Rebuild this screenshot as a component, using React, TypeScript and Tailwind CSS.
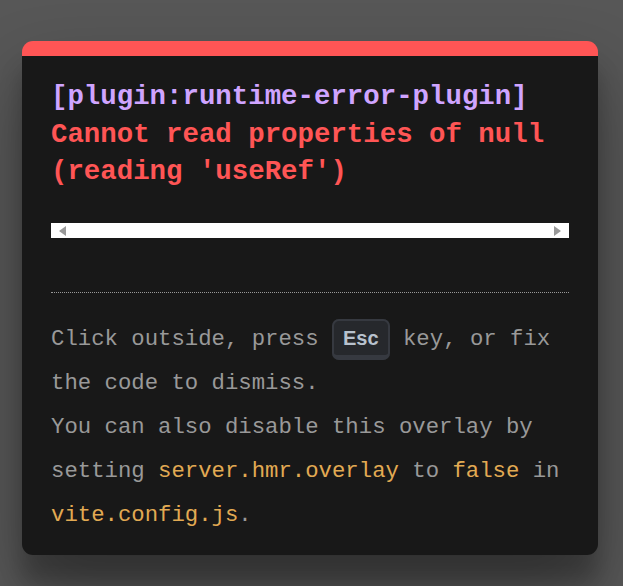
export default function App() {
  return (
    <div className="min-h-[586px] bg-[#575757] pt-[41px] pb-[31px] font-['Liberation_Mono',monospace]">
      <div className="ml-[22px] w-[576px] overflow-hidden rounded-[11px] border-t-[15px] border-[#ff5555] bg-[#181818] px-[29px] pt-[22px] pb-[18px] shadow-[0_36px_71px_rgba(0,0,0,0.3),0_28px_22px_rgba(0,0,0,0.22)]">
        <div className="whitespace-pre-wrap text-[27.4px] leading-[37.5px] font-bold">
          <div className="text-[#cfa4ff]">[plugin:runtime-error-plugin]</div>
          <div className="text-[#ff5555]">Cannot read properties of null (reading 'useRef')</div>
        </div>

        <div className="mt-[32.5px] mb-[54px] flex h-[15px] items-center justify-between bg-white px-[8px]">
          <svg width="7" height="10" viewBox="0 0 7 10">
            <path d="M7 0 L0 5 L7 10 Z" fill="#999" />
          </svg>
          <svg width="7" height="10" viewBox="0 0 7 10">
            <path d="M0 0 L7 5 L0 10 Z" fill="#999" />
          </svg>
        </div>

        <div className="border-t border-dotted border-[#999] pt-[24px] text-[22.3px] leading-[44px] text-[#999]">
          Click outside, press{' '}
          <kbd className="rounded-[7px] border-[2px] border-b-[5px] border-[#363940] bg-[#26282c] px-[9px] py-[6px] font-['Liberation_Sans',sans-serif] text-[20px] font-bold leading-[30px] text-[#b8c2ce]">
            Esc
          </kbd>{' '}
          key, or fix the code to dismiss.
          <br />
          You can also disable this overlay by setting <code className="text-[#e2aa53]">server.hmr.overlay</code> to{' '}
          <code className="text-[#e2aa53]">false</code> in <code className="text-[#e2aa53]">vite.config.js</code>.
        </div>
      </div>
    </div>
  );
}
